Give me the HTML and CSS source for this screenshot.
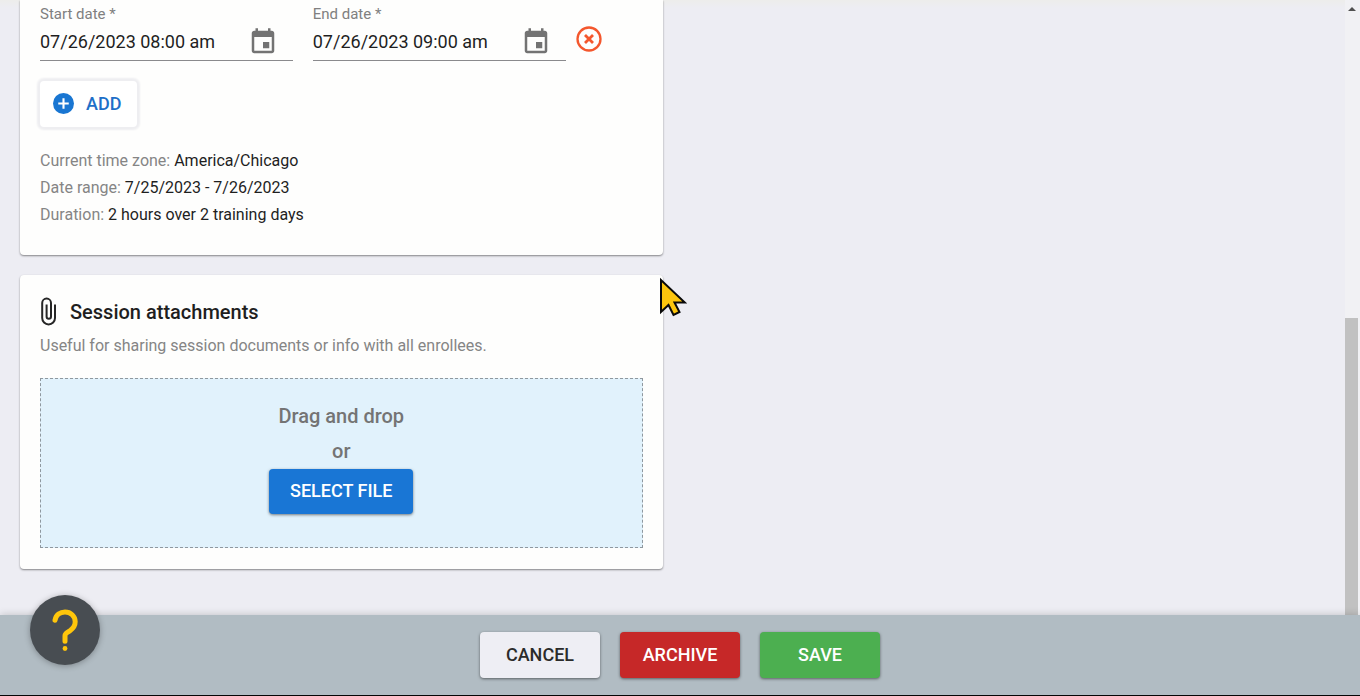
FILE: index.html
```html
<!DOCTYPE html>
<html lang="en">
<head>
<meta charset="utf-8">
<meta name="viewport" content="width=device-width, initial-scale=1">
<title>Edit session</title>
<link rel="stylesheet" href="styles.css">
</head>
<body class="page">
  <div class="viewport">
    <main class="content">
      <div class="column">
        <section class="card card-schedule" aria-label="Session schedule">
          <div class="date-row">
            <div class="field">
              <label class="field-label" for="start-date">Start date *</label>
              <div class="field-control">
                <input class="field-input" id="start-date" type="text" value="07/26/2023 08:00 am">
                <button class="icon-button" type="button" aria-label="Choose start date">
                  <svg class="icon-calendar" viewBox="0 0 24 24"><path d="M17 12h-5v5h5v-5zM16 1v2H8V1H6v2H5c-1.110 0-2 .9-2 2v14c0 1.100.89 2 2 2h14c1.100 0 2-.9 2-2V5c0-1.100-.9-2-2-2h-1V1h-2zm3 18H5V8h14v11z"/></svg>
                </button>
              </div>
            </div>
            <div class="field">
              <label class="field-label" for="end-date">End date *</label>
              <div class="field-control">
                <input class="field-input" id="end-date" type="text" value="07/26/2023 09:00 am">
                <button class="icon-button" type="button" aria-label="Choose end date">
                  <svg class="icon-calendar" viewBox="0 0 24 24"><path d="M17 12h-5v5h5v-5zM16 1v2H8V1H6v2H5c-1.110 0-2 .9-2 2v14c0 1.100.89 2 2 2h14c1.100 0 2-.9 2-2V5c0-1.100-.9-2-2-2h-1V1h-2zm3 18H5V8h14v11z"/></svg>
                </button>
              </div>
            </div>
            <button class="remove-button" type="button" aria-label="Remove date">
              <svg class="icon-remove" viewBox="0 0 26 26"><circle cx="13" cy="13" r="11.500" stroke-width="2.300"/><path d="M9 9l8 8M17 9l-8 8" stroke-width="2.800"/></svg>
            </button>
          </div>
          <button class="add-button" type="button">
            <svg class="icon-add" viewBox="0 0 20 20"><circle cx="10" cy="10" r="10" fill="#1976d2"/><path d="M10 5v10M5 10h10" stroke="#fff" stroke-width="2"/></svg>
            <span>ADD</span>
          </button>
          <div class="summary">
            <p class="summary-line">Current time zone: <span class="summary-value">America/Chicago</span></p>
            <p class="summary-line">Date range: <span class="summary-value">7/25/2023 - 7/26/2023</span></p>
            <p class="summary-line">Duration: <span class="summary-value">2 hours over 2 training days</span></p>
          </div>
        </section>

        <section class="card card-files" aria-labelledby="files-title">
          <div class="card-heading">
            <svg class="icon-clip" viewBox="0 0 18 30"><path d="M15 7.500V21a6.200 6.200 0 0 1-12.800 0V6a4.300 4.300 0 0 1 8.800 0V19.500a2.200 2.200 0 0 1-4.400 0V7.500"/></svg>
            <h2 class="card-title" id="files-title">Session attachments</h2>
          </div>
          <p class="card-note">Useful for sharing session documents or info with all enrollees.</p>
          <div class="dropzone">
            <span class="dropzone-text">Drag and drop</span>
            <span class="dropzone-text">or</span>
            <button class="button button-select" type="button">SELECT FILE</button>
          </div>
        </section>
      </div>
    </main>
    <div class="scrollbar" aria-hidden="true">
      <span class="scrollbar-arrow"></span>
      <span class="scrollbar-thumb"></span>
    </div>
  </div>

  <footer class="action-bar">
    <button class="button button-cancel" type="button">CANCEL</button>
    <button class="button button-archive" type="button">ARCHIVE</button>
    <button class="button button-save" type="button">SAVE</button>
  </footer>

  <button class="help-button" type="button" aria-label="Help">
    <svg class="icon-help" viewBox="0 0 26 42"><path d="M3 11.200C4 5.800 8.200 3 13 3c5.600 0 10.200 4.200 10.200 9.800 0 4-2 6.600-5.200 8.900-3.400 2.400-5 2.600-5 5v5.500"/><circle cx="13" cy="39.500" r="2.400"/></svg>
  </button>
  <svg class="cursor" viewBox="0 0 28 40" aria-hidden="true"><path d="M2 3v32l7.500-7 5 10 6-3-5-9.500h10.300z"/></svg>
</body>
</html>
```
FILE: styles.css
```css
* {
  box-sizing: border-box;
}

.page {
  margin: 0;
  height: 100vh;
  display: flex;
  flex-direction: column;
  overflow: hidden;
  position: relative;
  background: #ededf3;
  color: #1f1f1f;
  font-family: Roboto, "Liberation Sans", sans-serif;
}

button {
  font-family: inherit;
  border: 0;
  padding: 0;
  cursor: pointer;
}

.viewport {
  flex: 1;
  min-height: 0;
  display: flex;
}

.content {
  flex: 1;
  display: grid;
  grid-template-columns: repeat(2, minmax(0, 1fr));
  gap: 20px;
  padding: 0 20px;
  background: linear-gradient(#ededeb, #ededf3 8px);
}

.column {
  display: flex;
  flex-direction: column;
  gap: 20px;
}

.card {
  background: #fefefd;
  border-radius: 4px;
  box-shadow: 0 1px 2px rgba(0, 0, 0, 0.45);
}

.card-schedule {
  padding: 4px 20px 27px;
  border-top-left-radius: 0;
  border-top-right-radius: 0;
}

.card-files {
  padding: 20px 20px 21px;
}

.date-row {
  display: flex;
  align-items: center;
}

.field {
  flex: 1;
  min-width: 0;
}

.field + .field {
  margin-left: 20px;
}

.field-label {
  display: block;
  font-size: 15px;
  line-height: 20px;
  color: #808080;
}

.field-control {
  display: flex;
  align-items: center;
  height: 37px;
  padding-right: 15px;
  border-bottom: 1px solid #8a8a8d;
}

.field-input {
  flex: 1;
  min-width: 0;
  border: 0;
  outline: 0;
  padding: 0;
  background: transparent;
  color: #1f1f1f;
  font-family: inherit;
  font-size: 18px;
  line-height: 28px;
}

.icon-button {
  background: transparent;
  display: flex;
}

.icon-calendar {
  width: 30px;
  height: 30px;
  fill: #737373;
}

.remove-button {
  width: 77px;
  padding-left: 10px;
  margin-top: 12px;
  background: transparent;
  display: flex;
}

.icon-remove {
  width: 26px;
  height: 26px;
  fill: none;
  stroke: #f4572d;
}

.add-button {
  display: flex;
  align-items: center;
  gap: 12px;
  height: 46px;
  margin-top: 20px;
  padding: 0 16px 2px 13px;
  border-radius: 4px;
  background: #fff;
  box-shadow: 0 0 2px 3px #eeeef1;
  color: #1e6fc8;
  font-size: 18px;
  font-weight: 500;
}

.icon-add {
  width: 21px;
  height: 21px;
}

.summary {
  margin-top: 20px;
}

.summary-line {
  margin: 0;
  font-size: 16px;
  line-height: 27px;
  color: #858585;
}

.summary-value {
  color: #1f1f1f;
}

.card-heading {
  display: flex;
  align-items: center;
  gap: 12px;
}

.icon-clip {
  width: 18px;
  height: 30px;
  fill: none;
  stroke: #262626;
  stroke-width: 2;
}

.card-title {
  margin: 0;
  font-size: 20px;
  line-height: 34px;
  font-weight: 500;
}

.card-note {
  margin: 4px 0 19px;
  font-size: 16px;
  line-height: 26px;
  color: #858585;
}

.dropzone {
  display: flex;
  flex-direction: column;
  align-items: center;
  padding: 20px 20px 33px;
  border: 1px dashed #8f989f;
  background: #e1f2fc;
}

.dropzone-text {
  font-size: 20px;
  line-height: 35px;
  font-weight: 500;
  color: #747474;
}

.button {
  height: 46px;
  padding-bottom: 2px;
  border-radius: 4px;
  box-shadow: 0 1px 3px rgba(0, 0, 0, 0.5);
  color: #fff;
  font-size: 18px;
  font-weight: 500;
}

.button-select {
  height: 45px;
  padding: 0 21px 2px;
  background: #1976d5;
}

.scrollbar {
  width: 15px;
  display: flex;
  flex-direction: column;
  justify-content: space-between;
  align-items: flex-start;
  background: #f1f1f4;
}

.scrollbar-arrow {
  margin: 7px 0 0 3px;
  border: 4px solid transparent;
  border-top: 0;
  border-bottom-color: #505050;
}

.scrollbar-thumb {
  width: 13px;
  height: 48.300%;
  background: #c1c1c1;
}

.action-bar {
  display: flex;
  justify-content: center;
  align-items: flex-start;
  gap: 20px;
  padding: 17px 20px;
  position: relative;
  background: #b1bcc3;
  border-bottom: 1px solid #050505;
  box-shadow: 0 0 8px rgba(0, 0, 0, 0.2);
}

.action-bar .button {
  width: 120px;
}

.action-bar .button-cancel {
  background: #eeeef4;
  color: #2b2b2b;
}

.action-bar .button-archive {
  background: #c62828;
}

.action-bar .button-save {
  background: #4caf50;
}

.help-button {
  position: absolute;
  left: 30px;
  bottom: 31px;
  width: 70px;
  height: 70px;
  border-radius: 50%;
  background: #484d52;
  box-shadow: 0 1px 6px rgba(0, 0, 0, 0.3);
  display: flex;
  align-items: center;
  justify-content: center;
}

.icon-help {
  width: 26px;
  height: 42px;
  fill: none;
  stroke: #ffc60b;
  stroke-width: 5;
  stroke-linecap: round;
  stroke-linejoin: round;
}

.icon-help circle {
  fill: #ffc60b;
  stroke: none;
}

.cursor {
  position: absolute;
  left: 659px;
  top: 277px;
  width: 28px;
  height: 40px;
  fill: #fcc50d;
  stroke: #0a0a0a;
  stroke-width: 2;
}
```
